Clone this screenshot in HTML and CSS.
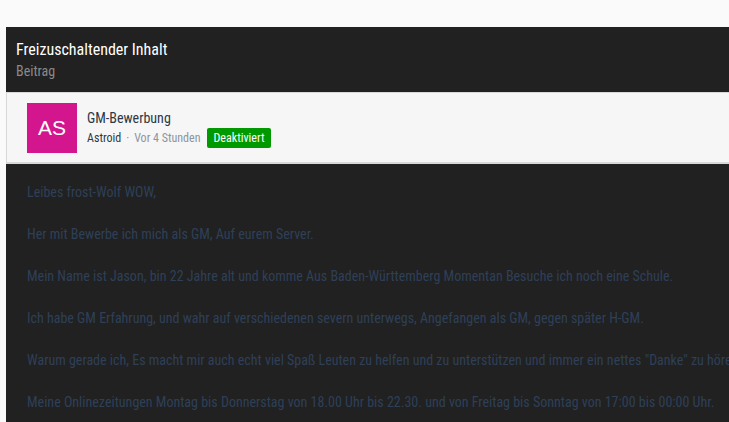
FILE: index.html
```html
<!DOCTYPE html>
<html lang="de">
<head>
  <meta charset="UTF-8">
  <title>Freizuschaltender Inhalt</title>
  <link rel="stylesheet" href="styles.css">
</head>
<body>
  <div class="block">
    <div class="block-head">
      <h2 class="block-title">Freizuschaltender Inhalt</h2>
      <div class="block-desc">Beitrag</div>
    </div>
    <div class="message-user">
      <div class="avatar">AS</div>
      <div class="message-info">
        <div class="thread-title">GM-Bewerbung</div>
        <div class="meta">
          <span class="username">Astroid</span>
          <span class="sep">&middot;</span>
          <span class="time">Vor 4 Stunden</span>
          <span class="label">Deaktiviert</span>
        </div>
      </div>
    </div>
    <div class="message-body">
      <p>Leibes frost-Wolf WOW,</p>
      <p>Her mit Bewerbe ich mich als GM, Auf eurem Server.</p>
      <p>Mein Name ist Jason, bin 22 Jahre alt und komme Aus Baden-Württemberg Momentan Besuche ich noch eine Schule.</p>
      <p>Ich habe GM Erfahrung, und wahr auf verschiedenen severn unterwegs, Angefangen als GM, gegen später H-GM.</p>
      <p>Warum gerade ich, Es macht mir auch echt viel Spaß Leuten zu helfen und zu unterstützen und immer ein nettes "Danke" zu hören.</p>
      <p>Meine Onlinezeitungen Montag bis Donnerstag von 18.00 Uhr bis 22.30. und von Freitag bis Sonntag von 17:00 bis 00:00 Uhr.</p>
    </div>
  </div>
</body>
</html>
```

FILE: styles.css
```css
body {
  margin: 0;
  padding: 27px 0 0 6px;
  background-color: #fafafa;
  font-family: "Roboto Condensed", Roboto, sans-serif;
  font-stretch: condensed;
  overflow: hidden;
}
.block {
  width: 760px;
  background-color: #212121;
}
.block-head {
  padding: 12px 10px 11px 10px;
  border-bottom: 1px solid #d8d8d8;
}
.block-title {
  margin: 0;
  font-size: 16px;
  font-weight: normal;
  color: #fff;
  line-height: 22px;
}
.block-desc {
  font-size: 14px;
  color: #8a8a8a;
  line-height: 20px;
}
.message-user {
  display: flex;
  align-items: center;
  gap: 10px;
  padding: 10px 20px 9px 20px;
  background-color: #f6f6f6;
  border-left: 1px solid #d8d8d8;
  border-bottom: 2px solid #d8d8d8;
}
.avatar {
  width: 50px;
  height: 50px;
  background-color: #d4168e;
  color: #fff;
  font-family: "Liberation Sans", Arial, sans-serif;
  font-size: 21px;
  display: flex;
  align-items: center;
  justify-content: center;
}
.thread-title {
  font-size: 14px;
  color: #2b3846;
  line-height: 18px;
  margin-bottom: 1px;
}
.meta {
  display: flex;
  align-items: center;
  gap: 5px;
  font-size: 12px;
}
.username {
  color: #2b3846;
}
.sep,
.time {
  color: #8c95a0;
}
.label {
  background-color: #009a00;
  color: #fff;
  border-radius: 2px;
  padding: 1px 7px;
  line-height: 18px;
  margin-left: 1px;
}
.message-body {
  padding: 18px 21px 10px 21px;
  color: #2e4058;
  font-size: 14px;
}
.message-body p {
  margin: 0 0 22px 0;
  line-height: 20px;
  white-space: nowrap;
}
```
